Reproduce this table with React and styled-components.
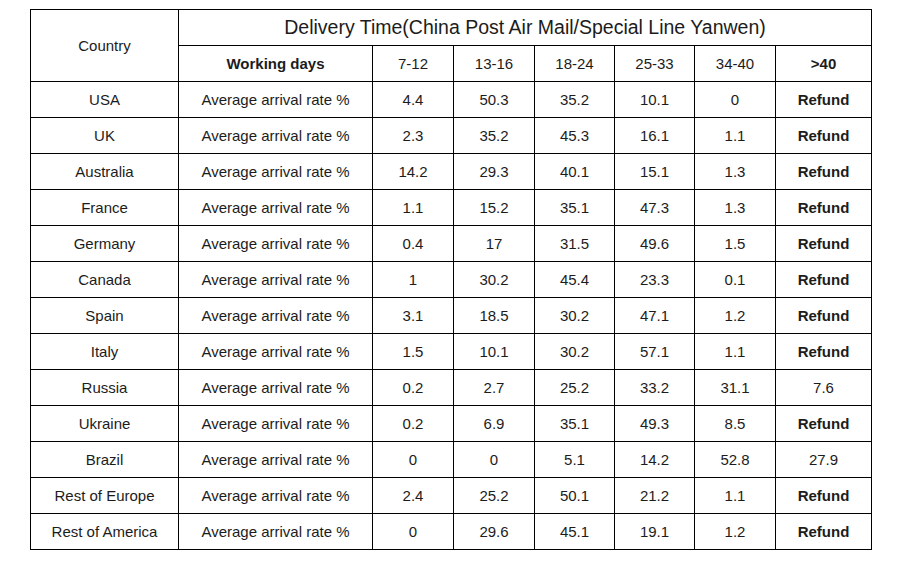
import React from "react";
import styled, { createGlobalStyle } from "styled-components";

const Global = createGlobalStyle`
  html, body { margin: 0; padding: 0; background: #fff; }
  body { font-family: "Liberation Sans", Arial, sans-serif; color: #1c1c1c; }
`;

const Page = styled.div`
  padding: 9px 0 0 30px;
`;

const Table = styled.table`
  border-collapse: collapse;
  table-layout: fixed;
  width: 841px;
`;

const Row = styled.tr`
  height: 36px;
`;

const Cell = styled.td`
  border: 1px solid #000;
  padding: 0;
  text-align: center;
  vertical-align: middle;
  font-size: ${(p) => (p.$title ? "19.5px" : "15px")};
  font-weight: ${(p) => (p.$bold ? 700 : 400)};
  line-height: 1;
  white-space: nowrap;
`;

const cols = [148, 194, 81, 81, 80, 80, 81, 96];
const ranges = ["7-12", "13-16", "18-24", "25-33", "34-40"];

const data = [
  ["USA", "4.4", "50.3", "35.2", "10.1", "0", "Refund"],
  ["UK", "2.3", "35.2", "45.3", "16.1", "1.1", "Refund"],
  ["Australia", "14.2", "29.3", "40.1", "15.1", "1.3", "Refund"],
  ["France", "1.1", "15.2", "35.1", "47.3", "1.3", "Refund"],
  ["Germany", "0.4", "17", "31.5", "49.6", "1.5", "Refund"],
  ["Canada", "1", "30.2", "45.4", "23.3", "0.1", "Refund"],
  ["Spain", "3.1", "18.5", "30.2", "47.1", "1.2", "Refund"],
  ["Italy", "1.5", "10.1", "30.2", "57.1", "1.1", "Refund"],
  ["Russia", "0.2", "2.7", "25.2", "33.2", "31.1", "7.6"],
  ["Ukraine", "0.2", "6.9", "35.1", "49.3", "8.5", "Refund"],
  ["Brazil", "0", "0", "5.1", "14.2", "52.8", "27.9"],
  ["Rest of Europe", "2.4", "25.2", "50.1", "21.2", "1.1", "Refund"],
  ["Rest of America", "0", "29.6", "45.1", "19.1", "1.2", "Refund"],
];

export default function App() {
  return (
    <>
      <Global />
      <Page>
        <Table>
          <colgroup>
            {cols.map((w, i) => (
              <col key={i} style={{ width: w }} />
            ))}
          </colgroup>
          <tbody>
            <Row>
              <Cell rowSpan={2}>Country</Cell>
              <Cell colSpan={7} $title>
                Delivery Time(China Post Air Mail/Special Line Yanwen)
              </Cell>
            </Row>
            <Row>
              <Cell $bold>Working days</Cell>
              {ranges.map((r) => (
                <Cell key={r}>{r}</Cell>
              ))}
              <Cell $bold>&gt;40</Cell>
            </Row>
            {data.map((d) => (
              <Row key={d[0]}>
                <Cell>{d[0]}</Cell>
                <Cell>Average arrival rate %</Cell>
                {d.slice(1, 6).map((v, i) => (
                  <Cell key={i}>{v}</Cell>
                ))}
                <Cell $bold={d[6] === "Refund"}>{d[6]}</Cell>
              </Row>
            ))}
          </tbody>
        </Table>
      </Page>
    </>
  );
}
